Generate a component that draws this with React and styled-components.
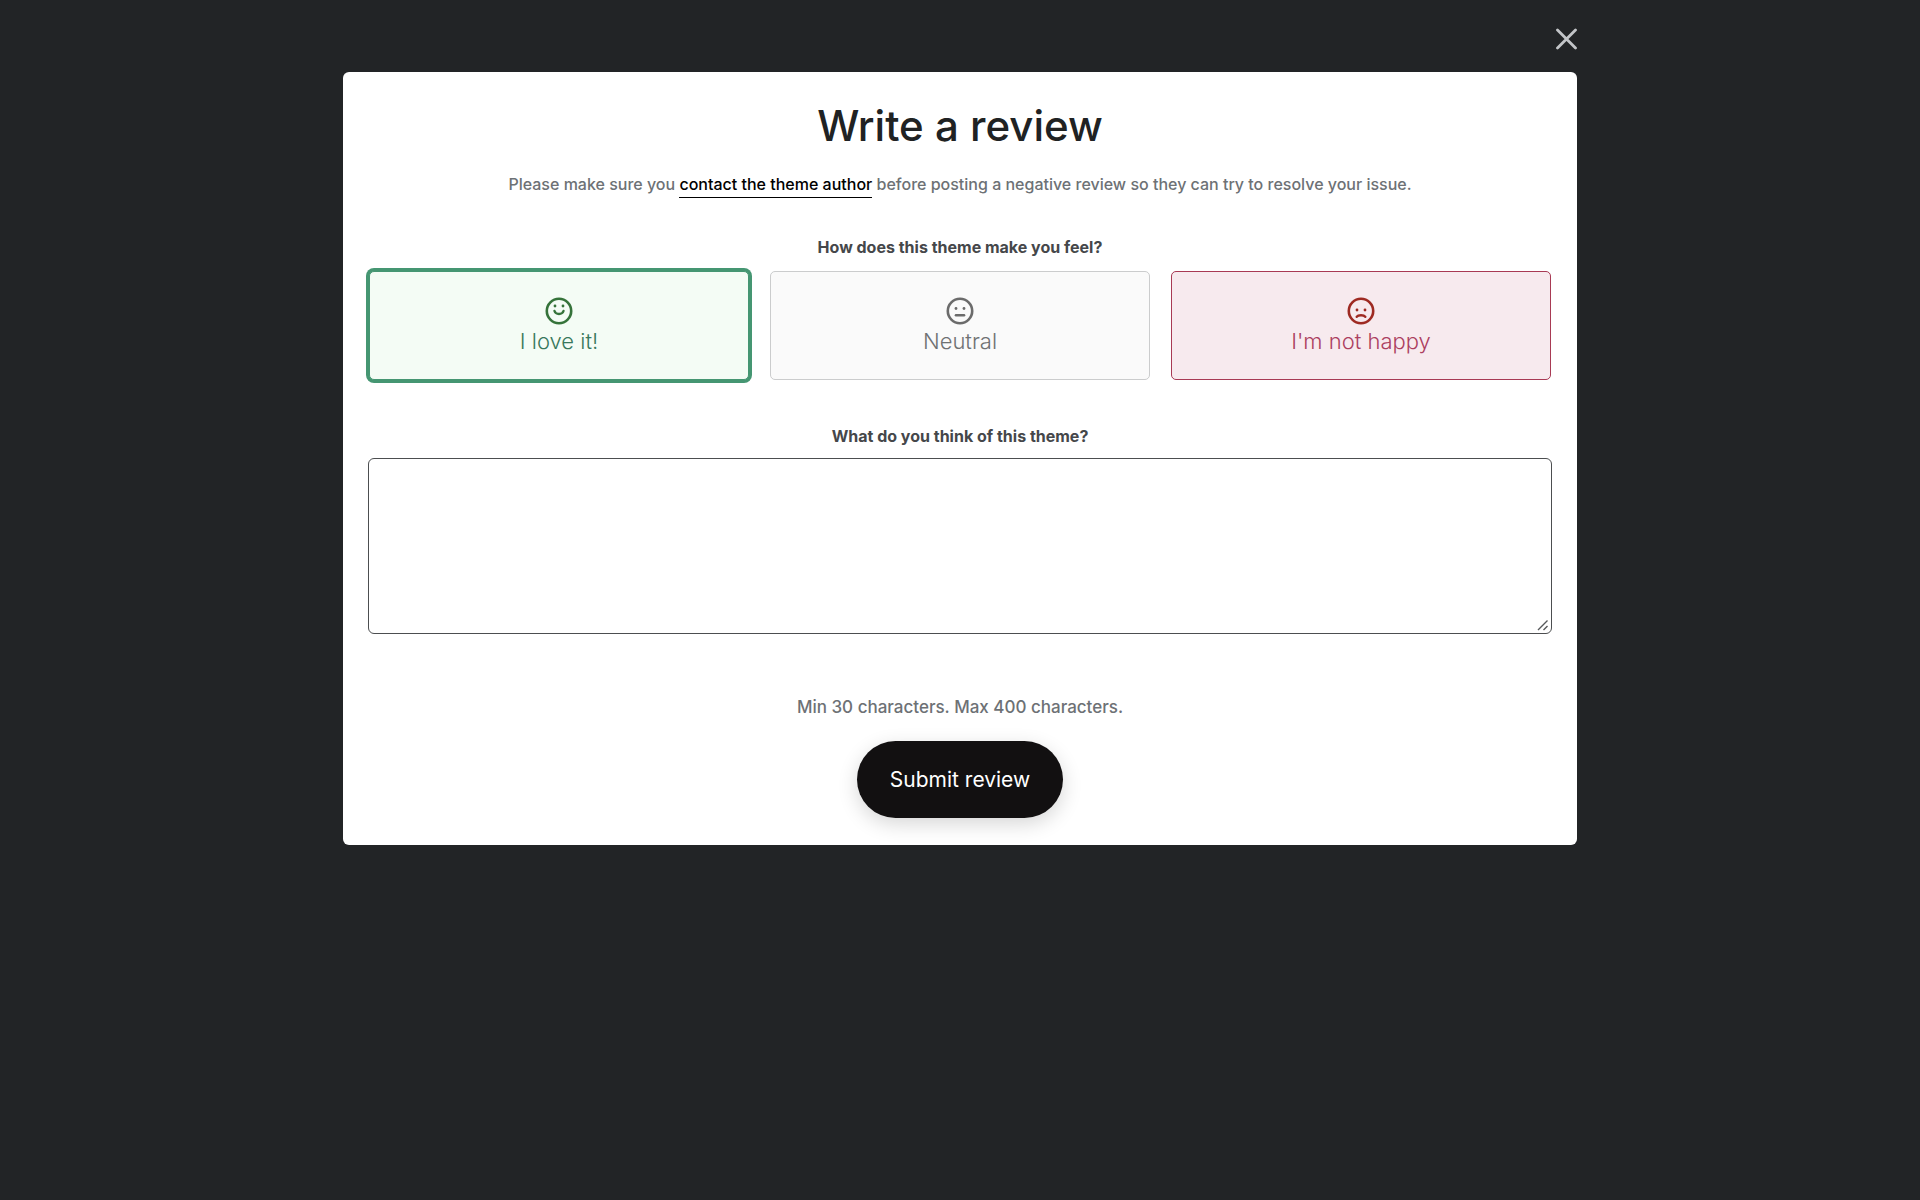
import React, { useState } from "react";
import styled, { createGlobalStyle, css } from "styled-components";

const GlobalStyle = createGlobalStyle`
  *, *::before, *::after {
    box-sizing: border-box;
  }
  body {
    margin: 0;
    min-height: 100vh;
    background: #222426;
    color: #202223;
    font-family: Inter, "Liberation Sans", sans-serif;
  }
`;

const Overlay = styled.div`
  display: flex;
  flex-direction: column;
  width: 100%;
  max-width: 1282px;
  margin: 0 auto;
  padding: 0 24px;
`;

const CloseBar = styled.div`
  display: flex;
  justify-content: flex-end;
  align-items: center;
  height: 72px;
  padding-top: 6px;
`;

const CloseButton = styled.button`
  display: flex;
  padding: 0;
  border: 0;
  background: none;
  color: #c3c5c8;
  cursor: pointer;
`;

const Modal = styled.section`
  padding: 24px 25px 27px;
  border-radius: 6px;
  background: #fff;
  text-align: center;
`;

const Title = styled.h1`
  margin: 0;
  font-size: 42px;
  line-height: 60px;
  font-weight: 500;
`;

const Intro = styled.p`
  margin: 16px 0 0;
  font-size: 16px;
  line-height: 24px;
  font-weight: 450;
  color: #6d7175;
`;

const AuthorLink = styled.a`
  padding-bottom: 3px;
  border-bottom: 1px solid #000;
  color: #000;
  font-weight: 500;
  text-decoration: none;
`;

const Form = styled.form`
  display: flex;
  flex-direction: column;
`;

const labelText = css`
  font-size: 16px;
  line-height: 24px;
  font-weight: 700;
  color: #45474a;
`;

const Feelings = styled.fieldset`
  min-width: 0;
  margin: 39px 0 0;
  padding: 0 1px;
  border: 0;
`;

const Legend = styled.legend`
  width: 100%;
  padding: 0;
  ${labelText}
`;

const Options = styled.div`
  display: grid;
  grid-template-columns: repeat(3, 1fr);
  gap: 21px;
  margin-top: 12px;
`;

const tones = {
  love: { text: "#38785c", icon: "#35733a", border: "#459672", fill: "#f4fcf5" },
  neutral: { text: "#6f7173", icon: "#6b6b6b", border: "#cbcccd", fill: "#fafafa" },
  unhappy: { text: "#ac3f60", icon: "#9e2a22", border: "#a83a54", fill: "#f7eaee" },
};

const Option = styled.label`
  display: flex;
  flex-direction: column;
  align-items: center;
  height: 109px;
  padding-top: 25px;
  border: 1px solid ${(p) => tones[p.$tone].border};
  border-radius: 5px;
  background: ${(p) => tones[p.$tone].fill};
  color: ${(p) => tones[p.$tone].text};
  font-size: 22px;
  line-height: 32px;
  font-weight: 300;
  cursor: pointer;

  svg {
    color: ${(p) => tones[p.$tone].icon};
  }

  &:has(input:checked) {
    box-shadow: 0 0 0 3px ${(p) => tones[p.$tone].border};
  }
`;

const HiddenRadio = styled.input`
  position: absolute;
  width: 1px;
  height: 1px;
  margin: 0;
  opacity: 0;
`;

const ReviewLabel = styled.label`
  margin-top: 44px;
  ${labelText}
`;

const ReviewBox = styled.div`
  position: relative;
  margin-top: 10px;
`;

const ReviewInput = styled.textarea`
  display: block;
  width: 100%;
  height: 176px;
  padding: 12px 16px;
  border: 1px solid #4c4e50;
  border-radius: 6px;
  background: #fff;
  font: inherit;
  font-size: 18px;
  resize: vertical;

  &::-webkit-resizer {
    background: transparent;
  }
`;

const Grip = styled.svg`
  position: absolute;
  right: 3px;
  bottom: 3px;
  color: #56585a;
  pointer-events: none;
`;

const Hint = styled.p`
  margin: 61px 0 0;
  font-size: 17px;
  line-height: 24px;
  font-weight: 500;
  color: #6d7175;
`;

const SubmitButton = styled.button`
  align-self: center;
  margin-top: 22px;
  padding: 22px 33px;
  border: 0;
  border-radius: 40px;
  background: #121011;
  box-shadow: 0 6px 20px rgba(0, 0, 0, 0.16);
  color: #fff;
  font-family: inherit;
  font-size: 21px;
  line-height: 33px;
  font-weight: 400;
  cursor: pointer;
`;

const faces = {
  love: (
    <>
      <circle cx="10" cy="9" r="1.4" fill="currentColor" />
      <circle cx="18" cy="9" r="1.4" fill="currentColor" />
      <path d="M9.5 14c1.3 4 7.7 4 9 0" stroke="currentColor" strokeWidth="2.4" strokeLinecap="round" />
    </>
  ),
  neutral: (
    <>
      <circle cx="10" cy="11.5" r="1.4" fill="currentColor" />
      <circle cx="18" cy="11.5" r="1.4" fill="currentColor" />
      <path d="M9.9 18.2h8.2" stroke="currentColor" strokeWidth="2.4" strokeLinecap="round" />
    </>
  ),
  unhappy: (
    <>
      <circle cx="10" cy="13" r="1.4" fill="currentColor" />
      <circle cx="18" cy="13" r="1.4" fill="currentColor" />
      <path d="M9.7 19.7c1.6-2 7-2 8.6 0" stroke="currentColor" strokeWidth="2.4" strokeLinecap="round" />
    </>
  ),
};

const Face = ({ tone }) => (
  <svg width="28" height="28" viewBox="0 0 28 28" fill="none" aria-hidden="true">
    <circle cx="14" cy="14" r="12.2" stroke="currentColor" strokeWidth="2.6" />
    {faces[tone]}
  </svg>
);

const options = [
  { tone: "love", label: "I love it!" },
  { tone: "neutral", label: "Neutral" },
  { tone: "unhappy", label: "I'm not happy" },
];

export default function App() {
  const [feeling, setFeeling] = useState("love");

  return (
    <>
      <GlobalStyle />
      <Overlay>
        <CloseBar>
          <CloseButton type="button" aria-label="Close">
            <svg width="22" height="22" viewBox="0 0 22 22" fill="none" aria-hidden="true">
              <path d="M2.5 2l18 18M20.5 2l-18 18" stroke="currentColor" strokeWidth="2.8" strokeLinecap="round" />
            </svg>
          </CloseButton>
        </CloseBar>
        <Modal role="dialog" aria-labelledby="review-title">
          <Title id="review-title">Write a review</Title>
          <Intro>
            Please make sure you <AuthorLink href="#author">contact the theme author</AuthorLink> before
            posting a negative review so they can try to resolve your issue.
          </Intro>
          <Form onSubmit={(e) => e.preventDefault()}>
            <Feelings>
              <Legend>How does this theme make you feel?</Legend>
              <Options>
                {options.map(({ tone, label }) => (
                  <Option key={tone} $tone={tone}>
                    <HiddenRadio
                      type="radio"
                      name="feeling"
                      value={tone}
                      checked={feeling === tone}
                      onChange={() => setFeeling(tone)}
                    />
                    <Face tone={tone} />
                    {label}
                  </Option>
                ))}
              </Options>
            </Feelings>
            <ReviewLabel htmlFor="review-text">What do you think of this theme?</ReviewLabel>
            <ReviewBox>
              <ReviewInput id="review-text" />
              <Grip width="12" height="12" viewBox="0 0 12 12" fill="none" aria-hidden="true">
                <path d="M1 11L10.5 1.5M6.5 11l4-4" stroke="currentColor" strokeWidth="1.4" />
              </Grip>
            </ReviewBox>
            <Hint>Min 30 characters. Max 400 characters.</Hint>
            <SubmitButton type="submit">Submit review</SubmitButton>
          </Form>
        </Modal>
      </Overlay>
    </>
  );
}
